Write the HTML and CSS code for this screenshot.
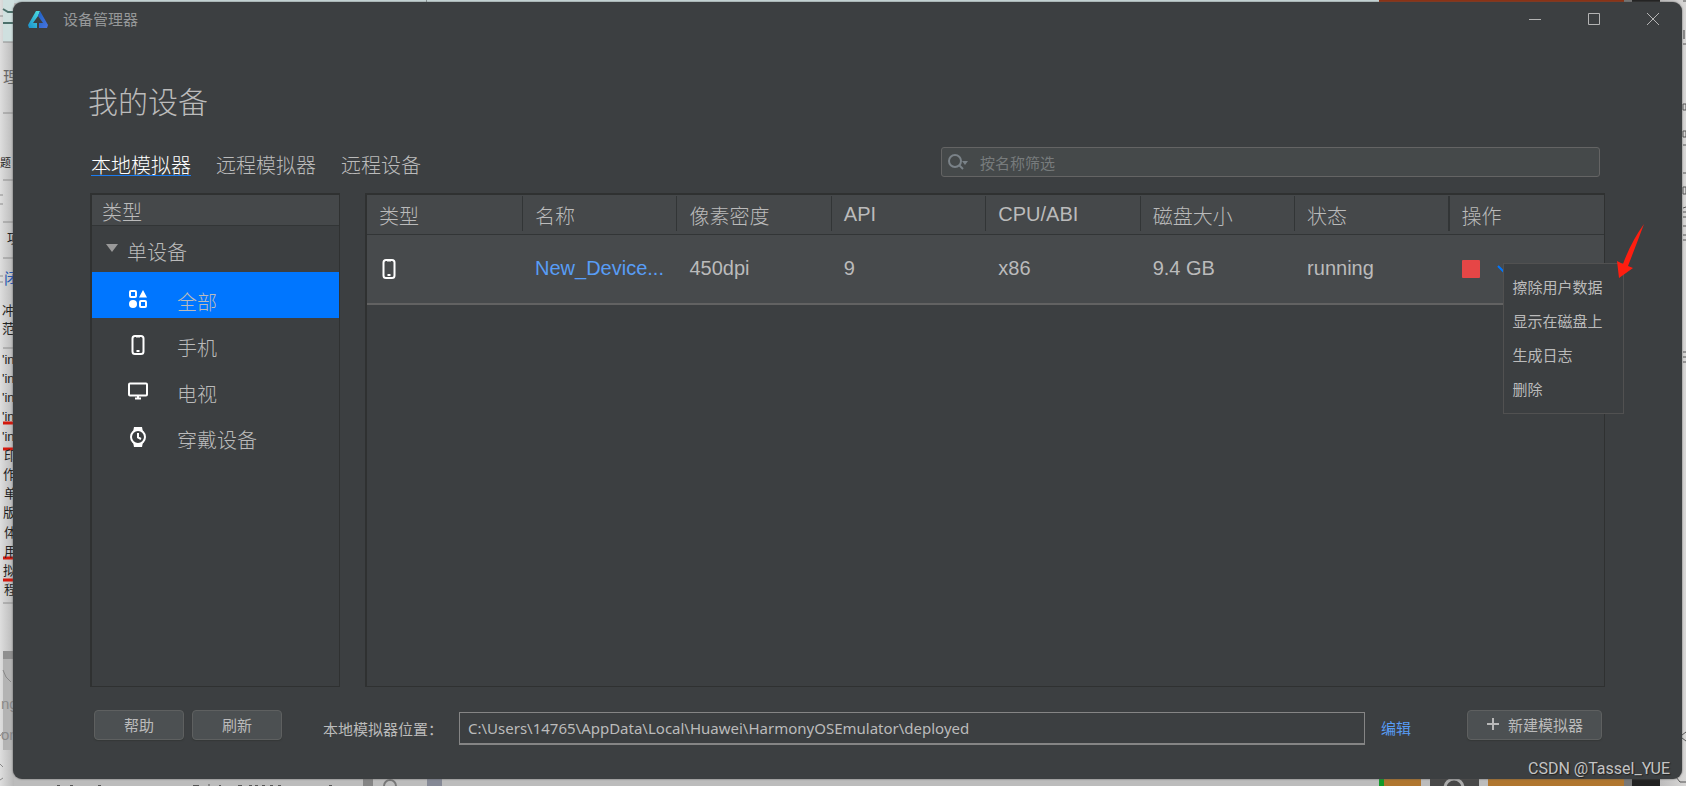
FILE: index.html
```html
<!DOCTYPE html>
<html lang="zh-CN">
<head>
<meta charset="utf-8">
<title>设备管理器</title>
<link rel="stylesheet" href="styles.css">
</head>
<body>
<svg class="backdrop" viewBox="0 0 1686 786" preserveAspectRatio="none" aria-hidden="true">
  <defs>
    <linearGradient id="edge"><stop offset="0" stop-color="#dedede"/><stop offset="1" stop-color="#b8b8b8"/></linearGradient>
    <linearGradient id="edgeRight"><stop offset="0" stop-color="#bdbcbc"/><stop offset="1" stop-color="#d8d7d6"/></linearGradient>
  </defs>
  <rect width="1686" height="786" fill="#bcbcbc"/>
  <rect width="14" height="786" fill="url(#edge)"/>
  <rect x="3" width="11" height="42" fill="#cfe0df"/>
  <rect x="14" width="1365" height="3" fill="#c9d9da"/>
  <rect x="426" width="1" height="3" fill="#8a9494"/>
  <rect x="1379" width="245" height="3" fill="#8e3213"/>
  <rect x="1624" width="8" height="3" fill="#777"/>
  <rect x="1632" width="28" height="3" fill="#222"/>
  <rect x="1660" width="26" height="786" fill="url(#edgeRight)"/>
  <path d="M3 9l5 3h6M3 23h10" stroke="#4c706b" stroke-width="2" fill="none"/>
  <path d="M0 16h3M3 42h10M3 113h10M3 180h10M3 222h10M3 258h10M3 348h10M3 603h10M0 195h3M0 204h3M0 276h3M0 282h3" stroke="#8c8c8c" fill="none"/>
  <path d="M3 423h10M3 449h10M3 558h10M3 580h10" stroke="#d3180d" stroke-width="3"/>
  <rect x="3" y="651" width="10" height="8" fill="#8f8f8f"/>
  <rect x="3" y="659" width="10" height="91" fill="#b3b3b3"/>
  <path d="M3 670l3 7 5 5M0 736l3-4M0 764l3 3M0 780l3-2" stroke="#888" fill="none"/>
  <g font-size="13" fill="#222">
    <text x="3" y="83" font-size="16" fill="#666">理</text>
    <text x="0" y="167" font-size="11">题</text>
    <text x="7" y="243">项</text>
    <text x="4" y="284" font-size="15" fill="#2557b0">闭</text>
    <text x="2" y="315">冲</text><text x="2" y="333">范</text>
    <text x="2" y="364">'in</text><text x="2" y="383">'in</text><text x="2" y="402">'in</text><text x="2" y="421">'in</text><text x="2" y="441">'in</text>
    <text x="4" y="460">印</text><text x="3" y="479">作</text><text x="4" y="498">单</text><text x="3" y="517">版</text><text x="4" y="537">体</text><text x="4" y="556">用</text><text x="3" y="575">拟</text><text x="4" y="594">程</text>
    <text x="1" y="709" font-size="15" fill="#8a8a8a">ng</text><text x="1" y="740" font-size="15" fill="#8a8a8a">on</text>
  </g>
  <rect x="363" y="779" width="10" height="7" fill="#858585"/>
  <circle cx="390" cy="786" r="6" fill="none" stroke="#777" stroke-width="2"/>
  <rect x="427" y="779" width="15" height="7" fill="#858996"/>
  <path d="M57 785.500h3M70 785.500h3M98 785.500h3M193 785.500h6M209 784v2M219 785.500h2M238 785.500h4M249 785.500h3M255 785.500h3M262 785.500h3M270 785.500h3M278 785.500h3M329 785.500h3" stroke="#555"/>
  <rect x="1379" y="779" width="5" height="7" fill="#119a2a"/>
  <rect x="1384" y="779" width="37" height="7" fill="#b0762f"/>
  <rect x="1430" y="779" width="49" height="7" fill="#484848"/>
  <circle cx="1454" cy="788" r="9" fill="none" stroke="#aaa" stroke-width="3"/>
  <rect x="1488" y="779" width="136" height="7" fill="#b0762f"/>
  <rect x="1624" y="779" width="8" height="7" fill="#777"/>
  <rect x="1632" y="779" width="28" height="7" fill="#222"/>
  <path d="M1683 44h3M1683 1h3M1683 145h3M1683 173h3M1683 187h3v7h-3zM1683 104h3v6h-3zM1683 131h3v6h-3zM1683 208l3-1M1683 226h3M1683 212h3M1683 217h3M1683 235h3M1683 240h3M1683 352h3M1683 357h3M1683 362h3M1676 777l4 5h6M1682 735l4-3M1682 738l4 3" stroke="#555" fill="none"/>
  <rect x="1683" y="30" width="2" height="9" fill="#888"/>
</svg>

<main class="window">
  <header class="titlebar">
    <svg class="logo" viewBox="0 0 20 17" aria-hidden="true">
      <defs>
        <linearGradient id="lg1" x1="1" y1="0" x2="0" y2="1"><stop offset="0" stop-color="#4fe0e0"/><stop offset="1" stop-color="#1a8fcb"/></linearGradient>
        <linearGradient id="lg2" x1="0" y1="0" x2="1" y2="1"><stop offset="0" stop-color="#1b62c4"/><stop offset="1" stop-color="#4a74e0"/></linearGradient>
      </defs>
      <path d="M8 0h4L10 5 5 12h4v5H1l-1-3z" fill="url(#lg1)"/>
      <path d="M12 0l8 14-1 3h-8v-5h4L10 5z" fill="url(#lg2)"/>
    </svg>
    <span class="app-name">设备管理器</span>
    <div class="window-controls">
      <button type="button" aria-label="最小化"><svg viewBox="0 0 14 14"><path d="M1 7.500h12"/></svg></button>
      <button type="button" aria-label="最大化"><svg viewBox="0 0 14 14"><path d="M1.500 1.500h11v11h-11z"/></svg></button>
      <button type="button" aria-label="关闭"><svg viewBox="0 0 14 14"><path d="M1 1l12 12M13 1L1 13"/></svg></button>
    </div>
  </header>

  <div class="content">
    <h1>我的设备</h1>

    <div class="toolbar">
      <div class="tabs" role="tablist">
        <button type="button" role="tab" aria-selected="true" class="tab tab-active">本地模拟器</button>
        <button type="button" role="tab" aria-selected="false" class="tab">远程模拟器</button>
        <button type="button" role="tab" aria-selected="false" class="tab">远程设备</button>
      </div>
      <label class="search">
        <svg viewBox="0 0 20 16" aria-hidden="true"><circle cx="7" cy="7" r="6"/><path d="M11 11l4 4"/><path class="solid" d="M14 7h6l-3 4z"/></svg>
        <input type="text" placeholder="按名称筛选" aria-label="按名称筛选">
      </label>
    </div>

    <div class="panels">
      <nav class="sidebar">
        <div class="sidebar-head">类型</div>
        <button type="button" class="group"><svg viewBox="0 0 12 8" aria-hidden="true"><path d="M0 0h12L6 8z"/></svg>单设备</button>
        <button type="button" class="item item-active">
          <svg class="icon" viewBox="0 0 20 20" aria-hidden="true"><rect x="2" y="2" width="6" height="6" rx="1"/><path class="solid" d="M15 1l4 7.500h-8z"/><circle class="solid" cx="5" cy="15" r="4"/><rect x="12" y="12" width="6" height="6" rx="1"/></svg><span>全部</span></button>
        <button type="button" class="item">
          <svg class="icon" viewBox="0 0 20 20" aria-hidden="true"><rect x="4.500" y="1" width="11" height="18" rx="2.500"/><path d="M8 1.500h4M8.500 16h3"/></svg><span>手机</span></button>
        <button type="button" class="item">
          <svg class="icon" viewBox="0 0 20 20" aria-hidden="true"><rect x="1" y="2.500" width="18" height="12" rx="1"/><path d="M10 14v3M7 17.500h6"/></svg><span>电视</span></button>
        <button type="button" class="item">
          <svg class="icon" viewBox="0 0 20 20" aria-hidden="true"><path class="solid" d="M6 0h8l1 5H5zM5 15h10l-1 5H6z"/><circle class="watch-face" cx="10" cy="10" r="7"/><path d="M10 6v4.500l3 1.500"/></svg><span>穿戴设备</span></button>
      </nav>

      <section class="device-list">
        <table>
          <thead>
            <tr><th>类型</th><th>名称</th><th>像素密度</th><th class="latin">API</th><th class="latin">CPU/ABI</th><th>磁盘大小</th><th>状态</th><th>操作</th></tr>
          </thead>
          <tbody>
            <tr>
              <td><svg class="icon" viewBox="0 0 20 20" role="img" aria-label="手机"><rect x="4.500" y="1" width="11" height="18" rx="2.500"/><path d="M8 1.500h4M8.500 16h3"/></svg></td>
              <td><a href="#">New_Device...</a></td>
              <td>450dpi</td><td>9</td><td>x86</td><td>9.4 GB</td><td>running</td>
              <td class="actions">
                <div class="action-row">
                  <button type="button" class="stop" aria-label="停止"></button>
                  <button type="button" class="more" aria-label="更多"><svg viewBox="0 0 12 8"><path d="M1 1l5 5 5-5"/></svg></button>
                </div>
                <div class="menu" role="menu">
                  <button type="button" role="menuitem">擦除用户数据</button>
                  <button type="button" role="menuitem">显示在磁盘上</button>
                  <button type="button" role="menuitem">生成日志</button>
                  <button type="button" role="menuitem">删除</button>
                  <svg class="pointer" viewBox="0 0 28 55" aria-hidden="true"><path d="M27 0Q14 18 6 40L0 37l2 17 14-10-5-2Q18 24 27 0z"/></svg>
                </div>
              </td>
            </tr>
          </tbody>
        </table>
      </section>
    </div>

    <footer class="footer">
      <div class="buttons">
        <button type="button" class="btn">帮助</button>
        <button type="button" class="btn">刷新</button>
      </div>
      <label class="path-label" for="path">本地模拟器位置：</label>
      <input id="path" class="path" type="text" readonly value="C:\Users\14765\AppData\Local\Huawei\HarmonyOSEmulator\deployed">
      <a class="edit" href="#">编辑</a>
      <button type="button" class="btn btn-new"><svg viewBox="0 0 14 14" aria-hidden="true"><path d="M7 1v12M1 7h12"/></svg>新建模拟器</button>
    </footer>
  </div>
  <div class="watermark">CSDN @Tassel_YUE</div>
</main>
</body>
</html>
```
FILE: styles.css
```css
* { box-sizing: border-box; }

body {
  margin: 0;
  min-height: 100vh;
  padding: 2px 4px 7px 13px;
  display: flex;
  font-family: "Liberation Sans", "Noto Sans CJK SC", sans-serif;
  color: #bbb;
  overflow: hidden;
}

button, input { font: inherit; color: inherit; }
button { background: none; border: 0; padding: 0; }
svg { display: block; flex: none; }

.backdrop {
  position: absolute;
  inset: 0;
  width: 100%;
  height: 100%;
}

.window {
  position: relative;
  flex: 1;
  display: flex;
  flex-direction: column;
  background: #3c3f41;
  border-radius: 9px;
  box-shadow: 0 0 2px #555;
}

.titlebar {
  display: flex;
  align-items: center;
  height: 34px;
  padding: 0 22px 0 15px;
}
.logo { width: 20px; height: 17px; margin-right: 15px; }
.app-name { padding-top: 2px; font-size: 15px; line-height: 20px; color: #969899; }
.window-controls { margin-left: auto; display: flex; gap: 45px; }
.window-controls svg {
  width: 14px;
  height: 14px;
  fill: none;
  stroke: #b4b4b4;
}

.content {
  flex: 1;
  display: flex;
  flex-direction: column;
  padding: 47px 77px 34px;
}

h1 {
  margin: 0 0 24px;
  text-indent: -2px;
  font-size: 30px;
  font-weight: 300;
  line-height: 40px;
}

.toolbar {
  display: flex;
  align-items: center;
  justify-content: space-between;
  height: 30px;
  margin-bottom: 16px;
}
.tabs { display: flex; gap: 25px; padding-left: 1px; }
.tab {
  height: 27px;
  padding-top: 8px;
  font-size: 20px;
  font-weight: 300;
  line-height: 18px;
  border-bottom: 1px solid transparent;
}
.tab-active { color: #fff; border-color: #1a7cf2; }

.search {
  display: flex;
  align-items: center;
  width: 43.5%;
  height: 30px;
  margin-right: 5px;
  padding: 0 8px 0 6px;
  background: #45494a;
  border: 1px solid #646464;
  border-radius: 3px;
}
.search svg {
  width: 20px;
  height: 16px;
  fill: none;
  stroke: #7a8288;
  stroke-width: 2;
}
.search .solid { fill: #7a8288; stroke: none; }
.search input {
  flex: 1;
  margin-left: 12px;
  padding: 2px 0 0;
  font-size: 15px;
  background: none;
  border: 0;
}
.search input::placeholder { color: #777b7c; }

.panels { flex: 1; display: flex; gap: 25px; }
.sidebar, .device-list {
  border: 1px solid #2f3131;
  border-width: 2px 1px 1px 2px;
}
.sidebar {
  width: 250px;
  display: flex;
  flex-direction: column;
  font-size: 20px;
  font-weight: 300;
}
.sidebar-head {
  height: 31px;
  padding-left: 10px;
  line-height: 37px;
  background: #45484a;
  border-bottom: 1px solid #323536;
}
.group {
  display: flex;
  align-items: center;
  gap: 9px;
  height: 46px;
  padding: 4px 0 0 14px;
}
.group svg { width: 12px; height: 8px; margin-bottom: 6px; fill: #999; }
.item {
  display: flex;
  align-items: center;
  gap: 29px;
  height: 46px;
  padding: 8px 0 0 36px;
}
.item span { padding-top: 5px; }
.item-active { background: #0076ff; }

.icon {
  width: 20px;
  height: 20px;
  fill: none;
  stroke: #fff;
  stroke-width: 2;
}
.icon .solid { fill: #fff; stroke: none; }
.icon .watch-face { fill: #3c3f41; }

.device-list { flex: 1; }
table {
  width: 100%;
  table-layout: fixed;
  border-collapse: collapse;
}
th, td { padding: 0 0 0 12px; text-align: left; font-size: 20px; }
th {
  height: 39px;
  padding-top: 5px;
  font-weight: 300;
  line-height: 30px;
  background: #45484a linear-gradient(#323536, #323536) no-repeat right 1px / 1px 35px;
  border-bottom: 1px solid #323536;
}
th:first-child { width: 156px; }
th:nth-last-child(2) { background-size: 2px 35px; }
th:last-child { background-image: none; }
.latin { padding-top: 0; }
td {
  height: 70px;
  background: #474a4c;
  border-bottom: 2px solid #626262;
}
a { color: #589df6; text-decoration: none; }
.actions { position: relative; }
.action-row { display: flex; align-items: center; gap: 17px; }
.stop {
  width: 18px;
  height: 18px;
  background: #e64646;
  border-radius: 1px;
}
.more svg {
  width: 12px;
  height: 8px;
  fill: none;
  stroke: #0076ff;
  stroke-width: 2;
}

.menu {
  position: absolute;
  left: 53px;
  top: 28px;
  width: 121px;
  padding: 6px 0 7px;
  display: flex;
  flex-direction: column;
  background: #3c3f41;
  border: 1px solid #515151;
}
.menu button {
  height: 34px;
  padding-left: 9px;
  font-size: 15px;
  text-align: left;
  white-space: nowrap;
}
.pointer {
  position: absolute;
  left: 113px;
  top: -40px;
  width: 28px;
  height: 55px;
  fill: #ff1e10;
}

.footer {
  display: flex;
  align-items: center;
  margin-top: 23px;
  height: 35px;
  padding: 0 3px 0 4px;
  font-size: 15px;
}
.buttons { display: flex; align-self: flex-start; gap: 8px; }
.btn {
  align-self: flex-start;
  display: flex;
  align-items: center;
  justify-content: center;
  width: 90px;
  height: 30px;
  padding-bottom: 2px;
  background: #4c5052;
  border: 1px solid #5e6060;
  border-radius: 4px;
  box-shadow: 0 1px 1px #353838;
}
.path-label { margin-left: 41px; width: 136px; padding-top: 2px; white-space: nowrap; }
.path {
  flex: 1;
  align-self: flex-end;
  min-width: 0;
  height: 33px;
  padding: 0 8px;
  font-family: "Noto Sans", "Noto Sans CJK SC", sans-serif;
  background: none;
  border: 1px solid #858585;
  border-bottom-width: 2px;
}
.edit { margin: 0 56px 0 16px; }
.btn-new { width: 135px; gap: 8px; }
.btn-new svg {
  width: 14px;
  height: 14px;
  stroke: #b8b8b8;
  stroke-width: 2;
}

.watermark {
  position: absolute;
  right: 12px;
  bottom: 0;
  font-family: Roboto, sans-serif;
  font-size: 16px;
  line-height: 20px;
  color: #c4c4c4;
  text-shadow: 1px 1px 1px #222;
}
```
